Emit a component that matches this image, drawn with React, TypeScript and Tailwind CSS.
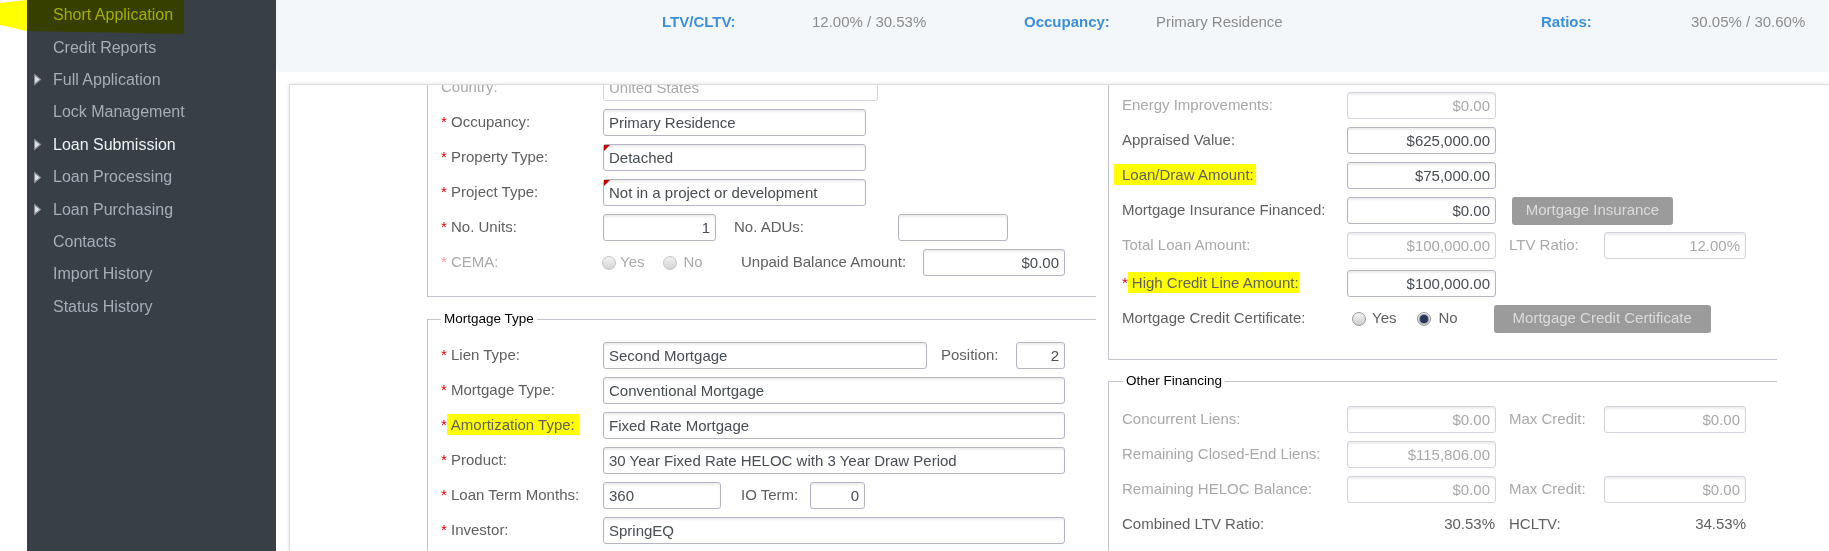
import React from "react";
import clsx from "clsx";

type FieldProps = { w: string; value?: string; right?: boolean; disabled?: boolean; mark?: boolean };

function Field({ w, value = "", right, disabled, mark }: FieldProps) {
  return (
    <div className={clsx("relative h-[27px] shrink-0", w)}>
      <input
        readOnly
        value={value}
        className={clsx(
          "h-full w-full rounded-[3px] border bg-white px-[5px] text-[15px] outline-none shadow-[inset_0_2px_2px_rgba(0,0,0,0.07)]",
          disabled ? "border-[#d3d3dd] text-[#a9a9a9]" : "border-[#b4b4c7] text-[#474c55]",
          right && "text-right"
        )}
      />
      {mark && (
        <span className="absolute left-[1px] top-[1px] h-0 w-0 border-r-[6px] border-t-[6px] border-r-transparent border-t-[#c00000]" />
      )}
    </div>
  );
}

type LabelProps = { text: string; w: string; req?: boolean; disabled?: boolean; hl?: "amort" | "draw" | "credit" };

function Label({ text, w, req, disabled, hl }: LabelProps) {
  const star = req ? <span className={disabled ? "text-[#f29a9a]" : "text-[#e00000]"}>*</span> : null;
  let body: React.ReactNode = text;
  if (hl === "amort") body = <span className="inline-block bg-[#ffff00] pl-[4px] pr-[4px] leading-[21px]">{text}</span>;
  if (hl === "draw") body = <span className="-ml-[8px] inline-block bg-[#ffff00] pl-[8px] pr-[2px] leading-[21px]">{text}</span>;
  if (hl === "credit") body = <span className="inline-block bg-[#ffff00] pl-[4px] leading-[21px]">{text}</span>;
  return (
    <div className={clsx("shrink-0 whitespace-nowrap text-[15px]", w, disabled ? "text-[#a9a9a9]" : "text-[#5f5f5f]")}>
      {star}
      {req && !hl ? " " : null}
      {body}
    </div>
  );
}

function Radio({ checked, disabled }: { checked?: boolean; disabled?: boolean }) {
  return (
    <span
      className={clsx(
        "flex h-[14px] w-[14px] shrink-0 items-center justify-center rounded-full border bg-gradient-to-b",
        disabled ? "border-[#c6c6c6] from-[#f2f2f2] to-[#d4d4d4]" : "border-[#9a9a9a] from-[#f4f4f4] to-[#cfcfcf]"
      )}
    >
      {checked && <span className="h-[8px] w-[8px] rounded-full bg-[#27385a] ring-1 ring-[#8492ac]" />}
    </span>
  );
}

function Row({ children, className }: { children: React.ReactNode; className?: string }) {
  return <div className={clsx("flex h-[27px] items-center", className)}>{children}</div>;
}

function Btn({ text, w }: { text: string; w: string }) {
  return (
    <div className={clsx("flex h-[28px] shrink-0 items-center justify-center rounded-[3px] bg-[#9b9b9b] text-[15px] text-[#dcdcdc]", w)}>
      {text}
    </div>
  );
}

const navItems = [
  { label: "Short Application" },
  { label: "Credit Reports" },
  { label: "Full Application", arrow: true },
  { label: "Lock Management" },
  { label: "Loan Submission", arrow: true, active: true },
  { label: "Loan Processing", arrow: true },
  { label: "Loan Purchasing", arrow: true },
  { label: "Contacts" },
  { label: "Import History" },
  { label: "Status History" },
];

export default function App() {
  return (
    <div className="relative flex h-[551px] w-[1829px] overflow-hidden bg-white font-['Liberation_Sans',Arial,sans-serif]">
      <div className="w-[27px] shrink-0" />

      {/* side nav */}
      <nav className="w-[249px] shrink-0 bg-[#373f47]">
        <ul className="-mt-[1px]">
          {navItems.map((it) => (
            <li key={it.label} className="flex h-[32.4px] items-center pl-[6px] text-[16px]">
              <span className="flex w-[20px] items-center">
                {it.arrow && (
                  <svg width="9" height="13" viewBox="0 0 9 13">
                    <polygon points="1.5,1.5 7.5,6.5 1.5,11.5" fill="#e2e2e2" stroke="#8a8f95" strokeWidth="1.2" strokeLinejoin="round" />
                  </svg>
                )}
              </span>
              <span className={it.active ? "text-[#eef0f2]" : "text-[#a5aeb7]"}>{it.label}</span>
            </li>
          ))}
        </ul>
      </nav>

      <div className="flex min-w-0 flex-1 flex-col">
        {/* summary bar */}
        <div className="flex h-[72px] shrink-0 items-start rounded-bl-[4px] bg-[#f4f7fa] pl-[386px] pt-[13px] text-[15px] leading-[18px]">
          <span className="w-[150px] font-bold text-[#3d8fd9]">LTV/CLTV:</span>
          <span className="w-[212px] text-[#8c8c8c]">12.00% / 30.53%</span>
          <span className="w-[132px] font-bold text-[#3d8fd9]">Occupancy:</span>
          <span className="w-[385px] text-[#8c8c8c]">Primary Residence</span>
          <span className="w-[150px] font-bold text-[#3d8fd9]">Ratios:</span>
          <span className="text-[#8c8c8c]">30.05% / 30.60%</span>
        </div>

        {/* form panel */}
        <div className="ml-[13px] mt-[12px] flex-1 overflow-hidden border-l border-t border-[#dcdcdc] bg-white shadow-[0_0_4px_rgba(0,0,0,0.12)]">
          <div className="-mt-[20px] flex gap-[12px] pl-[137px]">
            {/* left column */}
            <div className="w-[669px] shrink-0">
              <div className="flex flex-col gap-[8px] border-b border-l border-[#c4c4cf] pb-[20px] pl-[13px] pt-[9px]">
                <Row>
                  <Label w="w-[162px]" text="Country:" disabled />
                  <Field w="w-[275px]" value="United States" disabled />
                </Row>
                <Row>
                  <Label w="w-[162px]" text="Occupancy:" req />
                  <Field w="w-[263px]" value="Primary Residence" />
                </Row>
                <Row>
                  <Label w="w-[162px]" text="Property Type:" req />
                  <Field w="w-[263px]" value="Detached" mark />
                </Row>
                <Row>
                  <Label w="w-[162px]" text="Project Type:" req />
                  <Field w="w-[263px]" value="Not in a project or development" mark />
                </Row>
                <Row>
                  <Label w="w-[162px]" text="No. Units:" req />
                  <Field w="w-[113px]" value="1" right />
                  <Label w="ml-[18px] w-[164px]" text="No. ADUs:" />
                  <Field w="w-[110px]" />
                </Row>
                <Row>
                  <Label w="w-[162px]" text="CEMA:" req disabled />
                  <div className="-ml-[1px] flex w-[139px] shrink-0 items-center text-[15px] text-[#a9a9a9]">
                    <Radio disabled />
                    <span className="ml-[4px]">Yes</span>
                    <span className="ml-[19px]"><Radio disabled /></span>
                    <span className="ml-[6px]">No</span>
                  </div>
                  <Label w="w-[182px]" text="Unpaid Balance Amount:" />
                  <Field w="w-[142px]" value="$0.00" right />
                </Row>
              </div>

              <fieldset className="mt-[13px] border-b border-l border-t border-[#c4c4cf] pb-[20px] pl-[13px] pt-[14px]">
                <legend className="px-[3px] text-[13.5px] leading-[18px] text-black">Mortgage Type</legend>
                <div className="flex flex-col gap-[8px]">
                  <Row>
                    <Label w="w-[162px]" text="Lien Type:" req />
                    <Field w="w-[324px]" value="Second Mortgage" />
                    <Label w="ml-[14px] w-[75px]" text="Position:" />
                    <Field w="w-[49px]" value="2" right />
                  </Row>
                  <Row>
                    <Label w="w-[162px]" text="Mortgage Type:" req />
                    <Field w="w-[462px]" value="Conventional Mortgage" />
                  </Row>
                  <Row>
                    <Label w="w-[162px]" text="Amortization Type:" req hl="amort" />
                    <Field w="w-[462px]" value="Fixed Rate Mortgage" />
                  </Row>
                  <Row>
                    <Label w="w-[162px]" text="Product:" req />
                    <Field w="w-[462px]" value="30 Year Fixed Rate HELOC with 3 Year Draw Period" />
                  </Row>
                  <Row>
                    <Label w="w-[162px]" text="Loan Term Months:" req />
                    <Field w="w-[118px]" value="360" />
                    <Label w="ml-[20px] w-[69px]" text="IO Term:" />
                    <Field w="w-[55px]" value="0" right />
                  </Row>
                  <Row>
                    <Label w="w-[162px]" text="Investor:" req />
                    <Field w="w-[462px]" value="SpringEQ" />
                  </Row>
                </div>
              </fieldset>
            </div>

            {/* right column */}
            <div className="w-[669px] shrink-0">
              <div className="flex flex-col gap-[8px] border-b border-l border-[#c4c4cf] pb-[27px] pl-[13px] pt-[27px]">
                <Row>
                  <Label w="w-[225px]" text="Energy Improvements:" disabled />
                  <Field w="w-[149px]" value="$0.00" right disabled />
                </Row>
                <Row>
                  <Label w="w-[225px]" text="Appraised Value:" />
                  <Field w="w-[149px]" value="$625,000.00" right />
                </Row>
                <Row>
                  <Label w="w-[225px]" text="Loan/Draw Amount:" hl="draw" />
                  <Field w="w-[149px]" value="$75,000.00" right />
                </Row>
                <Row>
                  <Label w="w-[225px]" text="Mortgage Insurance Financed:" />
                  <Field w="w-[149px]" value="$0.00" right />
                  <div className="ml-[16px]">
                    <Btn w="w-[161px]" text="Mortgage Insurance" />
                  </div>
                </Row>
                <Row>
                  <Label w="w-[225px]" text="Total Loan Amount:" disabled />
                  <Field w="w-[149px]" value="$100,000.00" right disabled />
                  <Label w="ml-[13px] w-[95px]" text="LTV Ratio:" disabled />
                  <Field w="w-[142px]" value="12.00%" right disabled />
                </Row>
                <Row className="mt-[3px]">
                  <Label w="w-[225px]" text="High Credit Line Amount:" req hl="credit" />
                  <Field w="w-[149px]" value="$100,000.00" right />
                </Row>
                <Row>
                  <Label w="w-[225px]" text="Mortgage Credit Certificate:" />
                  <div className="flex items-center pl-[5px] text-[15px] text-[#5f5f5f]">
                    <Radio />
                    <span className="ml-[6px]">Yes</span>
                    <span className="ml-[21px]"><Radio checked /></span>
                    <span className="ml-[7px]">No</span>
                  </div>
                  <div className="ml-[36px]">
                    <Btn w="w-[217px]" text="Mortgage Credit Certificate" />
                  </div>
                </Row>
              </div>

              <fieldset className="mt-[12px] border-b border-l border-t border-[#c4c4cf] pb-[20px] pl-[13px] pt-[16px]">
                <legend className="ml-[1px] px-[3px] text-[13.5px] leading-[18px] text-black">Other Financing</legend>
                <div className="flex flex-col gap-[8px]">
                  <Row>
                    <Label w="w-[225px]" text="Concurrent Liens:" disabled />
                    <Field w="w-[149px]" value="$0.00" right disabled />
                    <Label w="ml-[13px] w-[95px]" text="Max Credit:" disabled />
                    <Field w="w-[142px]" value="$0.00" right disabled />
                  </Row>
                  <Row>
                    <Label w="w-[225px]" text="Remaining Closed-End Liens:" disabled />
                    <Field w="w-[149px]" value="$115,806.00" right disabled />
                  </Row>
                  <Row>
                    <Label w="w-[225px]" text="Remaining HELOC Balance:" disabled />
                    <Field w="w-[149px]" value="$0.00" right disabled />
                    <Label w="ml-[13px] w-[95px]" text="Max Credit:" disabled />
                    <Field w="w-[142px]" value="$0.00" right disabled />
                  </Row>
                  <Row>
                    <Label w="w-[225px]" text="Combined LTV Ratio:" />
                    <div className="w-[148px] shrink-0 text-right text-[15px] text-[#5f5f5f]">30.53%</div>
                    <Label w="ml-[14px] w-[95px]" text="HCLTV:" />
                    <div className="w-[142px] shrink-0 text-right text-[15px] text-[#5f5f5f]">34.53%</div>
                  </Row>
                </div>
              </fieldset>
            </div>
          </div>
        </div>
      </div>

      {/* marker highlight over the first nav entry */}
      <svg className="pointer-events-none absolute left-0 top-0 mix-blend-multiply" width="186" height="36" viewBox="0 0 186 36">
        <polygon points="0,3 27,0 184,0 184,34 27,31 0,25" fill="#ffff00" />
      </svg>
    </div>
  );
}
